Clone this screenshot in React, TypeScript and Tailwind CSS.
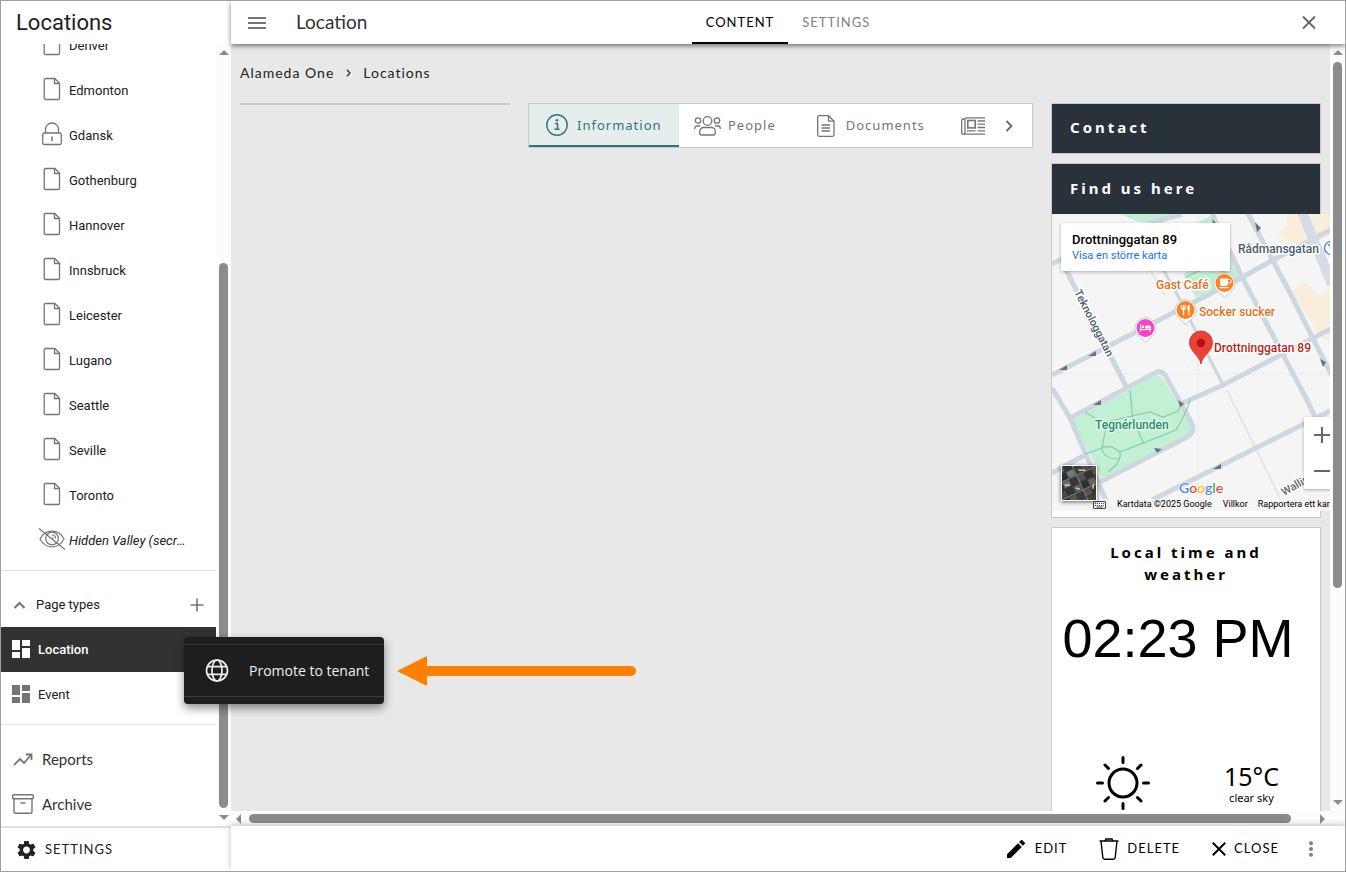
import React from 'react';

type PageIcon = 'page' | 'locked' | 'hidden';

interface LocationPage {
  name: string;
  icon: PageIcon;
}

const PAGES: LocationPage[] = [
  { name: 'Denver', icon: 'page' },
  { name: 'Edmonton', icon: 'page' },
  { name: 'Gdansk', icon: 'locked' },
  { name: 'Gothenburg', icon: 'page' },
  { name: 'Hannover', icon: 'page' },
  { name: 'Innsbruck', icon: 'page' },
  { name: 'Leicester', icon: 'page' },
  { name: 'Lugano', icon: 'page' },
  { name: 'Seattle', icon: 'page' },
  { name: 'Seville', icon: 'page' },
  { name: 'Toronto', icon: 'page' },
  { name: 'Hidden Valley (secret)', icon: 'hidden' },
];

function PageGlyph({ icon }: { icon: PageIcon }) {
  switch (icon) {
    case 'locked':
      return (
        <svg width="20" height="24" viewBox="0 0 20 24" fill="none" stroke="#757575" strokeWidth="1.3">
          <path d="M3.500 11V7.500a6.500 6.500 0 0 1 13 0V11" />
          <rect x="0.700" y="11" width="18.600" height="11.500" rx="1.500" />
          <path d="M10 14.500v4.500" strokeWidth="1.600" />
        </svg>
      );
    case 'hidden':
      return (
        <svg width="28" height="24" viewBox="0 0 28 24" fill="none" stroke="#757575" strokeWidth="1.2">
          <path d="M2 12C5 6.500 9 4.200 14 4.200S23 6.500 26 12c-3 5.300-7 8-12 8S5 17.300 2 12z" />
          <circle cx="14" cy="11.500" r="6.300" />
          <path d="M14 8a3.500 3.500 0 0 1 3.500 3.500M14 10.500a1 1 0 0 1 1 1" />
          <path d="M1 1.500 27 22.500" />
        </svg>
      );
    default:
      return (
        <svg width="18" height="24" viewBox="0 0 18 24" fill="none" stroke="#757575" strokeWidth="1.3">
          <path d="M2.500 1.500h9.300l4.700 4.700v15a1.300 1.300 0 0 1-1.300 1.300H2.500a1.300 1.300 0 0 1-1.300-1.300V2.800a1.300 1.300 0 0 1 1.300-1.300z" />
          <path d="M11.500 1.800v4.700h4.700" />
        </svg>
      );
  }
}

function DashboardIcon() {
  return (
    <svg width="18" height="18" viewBox="0 0 18 18" fill="currentColor">
      <path d="M0 0h8v10H0zM0 12h8v6H0zM10 0h8v6h-8zM10 8h8v10h-8z" />
    </svg>
  );
}

interface ArrowProps {
  dir: 'up' | 'down' | 'left' | 'right';
}

const ARROW_PATHS: Record<ArrowProps['dir'], string> = {
  up: 'M0 7 5 2l5 5z',
  down: 'M0 3l5 5 5-5z',
  left: 'M7 0 2 5l5 5z',
  right: 'M3 0l5 5-5 5z',
};

function ScrollArrow({ dir }: ArrowProps) {
  return (
    <svg className="shrink-0" width="10" height="10" viewBox="0 0 10 10" fill="#8b8b8b">
      <path d={ARROW_PATHS[dir]} />
    </svg>
  );
}

function Sidebar() {
  return (
    <aside className="flex w-[230px] shrink-0 flex-col bg-white">
      <h1 className="h-[43px] shrink-0 pl-[15px] text-[22px] leading-[43px]">Locations</h1>
      <div className="flex min-h-0 flex-1">
        {/* scrolled to the end, so the list hangs from the bottom edge */}
        <nav className="flex min-w-0 flex-1 flex-col justify-end overflow-hidden text-[13px]">
          <ul>
            {PAGES.map((page) => (
              <li key={page.name}>
                <a href="#" className="flex h-[45px] items-center pl-9">
                  <span className="-mt-1 flex w-[29px] shrink-0 justify-center">
                    <PageGlyph icon={page.icon} />
                  </span>
                  <span
                    className={`ml-[3px] w-[120px] truncate ${page.icon === 'hidden' ? 'italic' : ''}`}
                  >
                    {page.name}
                  </span>
                </a>
              </li>
            ))}
          </ul>
          <hr className="mt-[7px] mb-[11px] border-[#e0e0e0]" />
          <div className="flex h-[45px] shrink-0 items-center pl-3 pr-[11px]">
            <button type="button" className="flex flex-1 items-center text-left">
              <svg width="13" height="8" viewBox="0 0 13 8" fill="none" stroke="#757575" strokeWidth="2">
                <path d="M1.500 7 6.500 2l5 5" />
              </svg>
              <span className="ml-[10px]">Page types</span>
            </button>
            <button type="button" aria-label="Add page type">
              <svg width="16" height="16" viewBox="0 0 16 16" stroke="#757575" strokeWidth="1.600">
                <path d="M8 1.500v13M1.500 8h13" />
              </svg>
            </button>
          </div>
          <a
            href="#"
            className="flex h-[45px] shrink-0 items-center gap-2 bg-[#323232] pl-[11px] font-medium text-white"
          >
            <span className="-mt-[2px]">
              <DashboardIcon />
            </span>
            Location
          </a>
          <a href="#" className="flex h-[45px] shrink-0 items-center gap-2 pl-[11px]">
            <span className="-mt-[2px] text-[#757575]">
              <DashboardIcon />
            </span>
            Event
          </a>
          <hr className="mt-[7px] mb-3 border-[#e0e0e0]" />
          <a
            href="#"
            className="flex h-[45px] shrink-0 items-center pl-3 font-[Lato,sans-serif] text-[15px] text-[#333]"
          >
            <svg width="20" height="14" viewBox="0 0 20 14" fill="none" stroke="#757575" strokeWidth="1.800">
              <path d="M1 12l6-6 4 4 7-8" />
              <path d="M13 1.500h5.500V7" />
            </svg>
            <span className="ml-[9px]">Reports</span>
          </a>
          <a
            href="#"
            className="flex h-11 shrink-0 items-center pl-[11px] font-[Lato,sans-serif] text-[15px] text-[#333]"
          >
            <svg width="22" height="20" viewBox="0 0 22 20" fill="none" stroke="#757575" strokeWidth="1.400">
              <rect x="0.700" y="0.700" width="20.600" height="4" rx="1" />
              <path d="M2 4.700v13a1.500 1.500 0 0 0 1.500 1.500h15a1.500 1.500 0 0 0 1.500-1.500v-13M8.500 9h5" />
            </svg>
            <span className="ml-2">Archive</span>
          </a>
        </nav>
        <div className="flex w-[15px] shrink-0 flex-col items-center bg-[#fcfcfc] py-[4px]">
          <ScrollArrow dir="up" />
          <div className="my-[4px] flex w-[9px] flex-1 flex-col justify-end">
            <div className="h-[73%] rounded-full bg-[#8b8b8b]" />
          </div>
          <ScrollArrow dir="down" />
        </div>
      </div>
      <div className="h-[45px] shrink-0 border-t-2 border-[#e0e0e0]">
        <button
          type="button"
          className="flex h-full items-center pl-4 font-[Lato,sans-serif] text-[13px] tracking-[1px]"
        >
          <svg width="19" height="20" viewBox="2 2 20 20" fill="#222">
            <path d="M19.140 12.940c.040-.300.060-.610.060-.940 0-.320-.020-.640-.070-.940l2.030-1.580a.490.490 0 0 0 .120-.610l-1.920-3.320a.490.490 0 0 0-.590-.220l-2.390.960c-.500-.380-1.030-.700-1.620-.940l-.360-2.540a.484.484 0 0 0-.480-.410h-3.840c-.240 0-.430.170-.470.410l-.360 2.540c-.590.240-1.130.570-1.620.940l-2.390-.960c-.220-.080-.470 0-.590.220L2.740 8.870c-.120.210-.080.470.120.610l2.030 1.580c-.050.300-.090.630-.090.940s.020.640.070.940l-2.030 1.580a.490.490 0 0 0-.120.610l1.920 3.320c.120.220.370.290.590.220l2.390-.960c.500.380 1.030.700 1.620.940l.360 2.540c.050.240.240.410.480.410h3.840c.240 0 .440-.170.470-.410l.360-2.540c.590-.240 1.130-.560 1.620-.940l2.390.960c.220.080.470 0 .590-.220l1.920-3.320c.120-.220.070-.470-.120-.610l-2.010-1.580zM12 15.600c-1.980 0-3.600-1.620-3.600-3.600s1.620-3.600 3.600-3.600 3.600 1.620 3.600 3.600-1.620 3.600-3.600 3.600z" />
          </svg>
          <span className="ml-[9px]">SETTINGS</span>
        </button>
      </div>
    </aside>
  );
}

function TopBar() {
  return (
    <header className="z-10 grid h-[43px] shrink-0 grid-cols-[1fr_auto_1fr] bg-white font-[Lato,sans-serif] shadow-[0_2px_5px_rgba(0,0,0,0.5)]">
      <div className="flex items-center pl-[17px]">
        <button type="button" aria-label="Menu">
          <svg width="18" height="12" viewBox="0 0 18 12" stroke="#757575" strokeWidth="2">
            <path d="M0 1h18M0 6h18M0 11h18" />
          </svg>
        </button>
        <h2 className="ml-[30px] text-[19px] text-[#333]">Location</h2>
      </div>
      <div className="flex text-[13px] tracking-[1px]">
        <button type="button" className="border-b-2 border-black px-[14px] pt-[2px] text-black">
          CONTENT
        </button>
        <button type="button" className="border-b-2 border-transparent px-[14px] pt-[2px] text-[#808080]">
          SETTINGS
        </button>
      </div>
      <div className="flex items-center justify-end pr-[28px]">
        <button type="button" aria-label="Close">
          <svg width="16" height="16" viewBox="0 0 16 16" stroke="#666" strokeWidth="1.800">
            <path d="M2 1.500l12 12M14 1.500l-12 12" />
          </svg>
        </button>
      </div>
    </header>
  );
}

function ContentTabs() {
  return (
    <div className="flex h-[45px] border border-[#c9c9c9] bg-white text-[13px] tracking-[1px] text-[#757575]">
      <button
        type="button"
        className="flex w-[150px] shrink-0 items-center border-b-2 border-[#34737a] bg-[#e5eeec] pl-[17px] text-[#34737a]"
      >
        <svg width="22" height="22" viewBox="0 0 22 22" fill="none" stroke="currentColor" strokeWidth="1.400">
          <circle cx="11" cy="11" r="10.200" />
          <path d="M9 9.500h2.500V15M8.500 15.200h5" strokeWidth="1.600" />
          <circle cx="11" cy="6.300" r="1.300" fill="currentColor" stroke="none" />
        </svg>
        <span className="ml-[9px] pt-[2px]">Information</span>
      </button>
      <button type="button" className="flex shrink-0 items-center pl-[15px]">
        <svg width="27" height="20" viewBox="0 0 27 20" fill="none" stroke="currentColor" strokeWidth="1.300">
          <circle cx="13.500" cy="5" r="4.300" />
          <circle cx="4" cy="4.500" r="2.700" />
          <circle cx="23" cy="4.500" r="2.700" />
          <path d="M5.700 17v-1.500a4 4 0 0 1 4-4h7.600a4 4 0 0 1 4 4V17a2 2 0 0 1-2 2H7.700a2 2 0 0 1-2-2z" />
          <path d="M.700 13v-.500a2.500 2.500 0 0 1 2.500-2.500h3M26.300 13v-.500a2.500 2.500 0 0 0-2.500-2.500h-3" />
        </svg>
        <span className="ml-[7px]">People</span>
      </button>
      <button type="button" className="ml-[41px] flex shrink-0 items-center">
        <svg width="18" height="22" viewBox="0 0 18 22" fill="none" stroke="currentColor" strokeWidth="1.300">
          <path d="M2.200.700h9.300L17 6.200v13.600a1.500 1.500 0 0 1-1.500 1.500H2.200a1.500 1.500 0 0 1-1.500-1.500V2.200A1.500 1.500 0 0 1 2.200.700z" />
          <path d="M11.500.700v5.500H17M4.500 10h8.500M4.500 13h8.500M4.500 16h8.500" />
        </svg>
        <span className="ml-[11px]">Documents</span>
      </button>
      <div className="ml-auto flex items-center pr-[19px]">
        <button type="button" aria-label="News">
          <svg width="24" height="18" viewBox="0 0 24 18" fill="none" stroke="currentColor" strokeWidth="1.300">
            <path d="M24 .800H5.500A1.500 1.500 0 0 0 4 2.300v12.900a2 2 0 0 1-2 2 1.300 1.300 0 0 1-1.300-1.300V3.500A1.500 1.500 0 0 1 2.200 2H4M2 17.200h22" />
            <rect x="6.800" y="3.500" width="7.400" height="7.400" strokeWidth="1.600" />
            <path d="M16.500 4H24M16.500 7.200H24M16.500 10.500H24M6 13.800h8.500M16.500 13.800H24" />
          </svg>
        </button>
        <button type="button" aria-label="More tabs" className="ml-5">
          <svg width="8" height="12" viewBox="0 0 8 12" fill="none" stroke="#666" strokeWidth="1.800">
            <path d="M1.500 1l5 5-5 5" />
          </svg>
        </button>
      </div>
    </div>
  );
}

const ROADS = [
  'M0 161 185 66 221 46 290 10',
  'M0 50 10 45M12 52 75 174',
  'M158-5 190 63 255 186 263 203',
  'M194-4 235 73 290 182',
  'M131 189 171 171 290 109',
  'M100 286 290 191',
  'M0 174 18 204 60 300',
  'M18 204 75 174 101 160Q108 155 113 161L139 208Q144 217 135 223L48 268',
  'M0 259 33 241',
];

const SATELLITE_ROWS = [
  '#3d4a35', '#59605a', '#2c3330', '#6b5d5a', '#46543c', '#303338',
  '#524844', '#2b3128', '#747b80', '#36452f', '#5a4a4c', '#3e4046',
  '#2f3a2b', '#6a6e68', '#3c3535', '#554e57', '#2e3530', '#66504f',
  '#45503a', '#34303a', '#596553', '#2b2d30', '#70605e', '#3b4438',
  '#2a3129', '#4e5c40', '#3a3c42', '#684c50', '#333831', '#575b60',
  '#4b5545', '#2d302c', '#605550', '#394535', '#4c4148', '#2c322a',
];

interface PinProps {
  x: number;
  y: number;
  color: string;
}

function Pin({ x, y, color }: PinProps) {
  return (
    <g transform={`translate(${x} ${y})`}>
      <path
        d="M0 14.500-6 9A10.600 10.600 0 1 1 6 9z"
        fill="#fff"
        stroke="#b9bdc2"
        strokeWidth="0.800"
      />
      <circle r="9" fill={color} />
    </g>
  );
}

function MapCanvas() {
  return (
    <svg width="300" height="297" viewBox="0 0 300 297" className="block" fontFamily="Roboto, sans-serif">
      <rect width="300" height="297" fill="#f5f5f5" />
      <g fill="#c2f0d5">
        <path d="M68 0h57L98 9 84 7zM144 9l15-7 8 8-10 20z" />
        <path d="M131 60l44-22 13 24-44 22z" />
        <path d="M20 206 103 162q5-2 8 3l27 46q2 6-4 10L50 264z" />
      </g>
      <g fill="#f8eedb">
        <path d="M236-1h54v16l-38 20-27-15 9-7z" />
        <path d="M239 77l15-8 18 19 8 6v34l-10-4z" />
        <path d="M246 78l12-6 6 10 20-10v40l-18 8z" />
      </g>
      <g fill="none" stroke="#e3e5e7" strokeWidth="2">
        <path d="M175 176 228 284M98 55l14 26" />
        <path d="M146 0v297M0 160h290" strokeWidth="1" strokeOpacity="0.500" />
        <path d="M112 57 123 76 171 171" stroke="#ccd6df" strokeWidth="3" />
      </g>
      <g fill="none" stroke="#ccd7e0" strokeWidth="5" strokeLinejoin="round">
        {ROADS.map((d) => (
          <path key={d} d={d} />
        ))}
        <path d="M249-4 280 70" stroke="#d5dce6" strokeWidth="10" />
        <path d="M96 10 130 0" />
      </g>
      <g fill="none" stroke="#82d0ab" strokeWidth="1.200">
        <path d="M33 240 50 234Q54 210 58 207L98 198 111 203 126 197 131 188M78 176l3 30 11 24" />
        <path d="M50 234q8-4 18 4l56-22q14-24 14-32M68 238q2 10-12 20M50 235q2 10 18 10M33 198l10 6" />
        <path d="M134 63l28-13 15 12M150 20l12-10" />
      </g>
      <g fill="#6a737c">
        <path d="M7 156l8-5 0 5zM36 142l8-5 0 5zM41 191l8-5 0 5zM110 235l-8-1 3 5zM161 255l8-5 0 5zM126 186l2 7 4-3zM160 5l2 9 4-3zM203 8l2 10 4-4zM268 145l3 8 3-5z" />
      </g>
      <g strokeLinejoin="round" stroke="#fff" strokeWidth="3" paintOrder="stroke" fontSize="12" fontWeight="500">
        <text x="186" y="39" fill="#4a5b72">Rådmansgatan</text>
        <text x="104" y="75" fill="#e0701c">Gast Café</text>
        <text x="147" y="102" fill="#e0701c">Socker sucker</text>
        <text x="162" y="138" fill="#b3261e">Drottninggatan 89</text>
        <text x="43" y="215" fill="#2b8f6c" stroke="#dff7ea">Tegnérlunden</text>
        <text transform="translate(22 78) rotate(63)" fontSize="11" fill="#4a5b72">Teknologgatan</text>
        <text transform="translate(232 282) rotate(-30)" fontSize="11" fill="#5f6872">Wallingatan</text>
      </g>
      <circle cx="279" cy="34" r="6.500" fill="#fff" stroke="#3f7fd0" strokeWidth="1.300" />
      <path d="M276 31h6M279 31v6" stroke="#3f7fd0" strokeWidth="1.300" />
      <Pin x={172.5} y={69} color="#ff8124" />
      <Pin x={133.5} y={96} color="#ff8124" />
      <Pin x={93.500} y={114} color="#f843c8" />
      <g fill="#fff">
        <path d="M168 64.500h8v5a2.500 2.500 0 0 1-2.500 2.500h-3a2.500 2.500 0 0 1-2.500-2.500zM167.500 73h9.500v1.200h-9.500z" />
        <path d="M176 65.500h1.500a1.500 1.500 0 0 1 0 3.500H176" fill="none" stroke="#fff" />
        <path d="M129.500 91v3.500M131.500 91v3.500M133.300 91v3.500M131.500 94v7.500M137 91v10.500" stroke="#fff" strokeWidth="1.200" />
        <path d="M129 94h4.800l-1 2h-2.800zM135.500 92l1.500-1v6h-1.500z" />
        <path d="M88 110.500h1.200v4.500h8.600v-3h1v5.500h-1.200V116h-8.400v1.500H88z" />
        <circle cx="91" cy="112.800" r="1.300" />
        <path d="M93 111.500h4.800v3H93z" />
      </g>
      <path
        d="M149 150c-1.500-9-11.500-12-11.500-21.500a11.500 11.500 0 0 1 23 0C160.500 138 150.500 141 149 150z"
        fill="#ea4335"
        stroke="#c5221f"
        strokeWidth="0.700"
      />
      <circle cx="149" cy="129" r="4.200" fill="#b31412" />
      <text x="127" y="279" fontSize="14" fontWeight="500" fontFamily="Lato, sans-serif" stroke="#fff" strokeWidth="1" paintOrder="stroke">
        <tspan fill="#4285f4">G</tspan>
        <tspan fill="#ea4335">o</tspan>
        <tspan fill="#fbbc05">o</tspan>
        <tspan fill="#4285f4">g</tspan>
        <tspan fill="#34a853">l</tspan>
        <tspan fill="#ea4335">e</tspan>
      </text>
    </svg>
  );
}

function SatelliteThumb() {
  return (
    <svg width="34" height="34" viewBox="0 0 34 34">
      <rect width="34" height="34" fill="#363c35" />
      <g transform="rotate(-25 17 17)">
        {SATELLITE_ROWS.map((fill, i) => (
          <rect key={i} x={-6 + (i % 6) * 8} y={-6 + Math.floor(i / 6) * 8} width="7" height="6" fill={fill} />
        ))}
        <path d="M-8 9h50M18-8v50M-8 25h50" stroke="#8a8f92" strokeWidth="0.800" />
        <path d="M3 13l5 2M22 5l6 3M12 20l3 3M27 28l3-4" stroke="#c9cccb" strokeWidth="1.500" />
      </g>
    </svg>
  );
}

function MapCard() {
  return (
    <section className="border border-[#c9c9c9] bg-white pb-[6px]">
      <h3 className="flex h-[50px] items-center bg-[#293238] pb-[2px] pl-[18px] font-[Noto_Sans,sans-serif] text-[15px] font-bold tracking-[3px] text-white">
        Find us here
      </h3>
      <div className="relative h-[297px] w-[300px]">
        <MapCanvas />
        <div className="absolute top-[9px] left-[9px] h-12 w-[169px] bg-white pt-2 pl-[11px] shadow-[0_1px_3px_rgba(0,0,0,0.3)]">
          <p className="text-[13px] leading-[17px] font-medium text-black">Drottninggatan 89</p>
          <a href="#" className="block text-[11px] leading-[15px] text-[#1a73e8]">
            Visa en större karta
          </a>
        </div>
        <div className="absolute top-[203px] left-[252px] flex h-[72px] w-9 flex-col bg-white shadow-[0_1px_3px_rgba(0,0,0,0.3)]">
          <button type="button" aria-label="Zoom in" className="flex flex-1 items-center justify-center">
            <svg width="16" height="16" viewBox="0 0 16 16" stroke="#666" strokeWidth="2">
              <path d="M8 0v16M0 8h16" />
            </svg>
          </button>
          <button type="button" aria-label="Zoom out" className="flex flex-1 items-center justify-center">
            <svg width="16" height="16" viewBox="0 0 16 16" stroke="#666" strokeWidth="2">
              <path d="M0 8h16" />
            </svg>
          </button>
        </div>
        <div className="absolute bottom-0 left-[41px] flex h-3 items-center bg-[#f5f5f5]/80 text-[9px] whitespace-nowrap text-black">
          <svg width="13" height="8" viewBox="0 0 13 8" fill="none" stroke="#444">
            <rect x="0.500" y="0.500" width="12" height="7" rx="0.500" />
            <path d="M2 2.500h9M2 4.500h9" strokeDasharray="1 1" />
            <path d="M3.500 6h6" />
          </svg>
          <span className="ml-[11px]">Kartdata ©2025 Google</span>
          <a href="#" className="ml-[11px]">Villkor</a>
          <a href="#" className="ml-[10px]">Rapportera ett kartfel</a>
        </div>
        <button
          type="button"
          aria-label="Satellite view"
          className="absolute bottom-[10px] left-[9px] border border-white shadow-[0_1px_4px_rgba(0,0,0,0.6)]"
        >
          <SatelliteThumb />
        </button>
      </div>
    </section>
  );
}

function WeatherCard() {
  return (
    <section className="h-[330px] border border-[#c9c9c9] bg-white pt-[13px] text-center text-black">
      <h3 className="px-8 font-[Noto_Sans,sans-serif] text-[15px] leading-[22px] font-bold tracking-[3px]">
        Local time and weather
      </h3>
      <p className="mt-[22px] pr-4 font-[Liberation_Sans,Arial,sans-serif] text-[54px] leading-[62px] whitespace-nowrap">
        02:23 PM
      </p>
      <div className="mt-[87px] flex items-center pr-[41px] pl-11">
        <svg width="54" height="54" viewBox="0 0 54 54" fill="none" stroke="#000" strokeWidth="3" strokeLinecap="round">
          <circle cx="27" cy="27" r="14" />
          <path d="M27 1.500v5M27 47.500v5M1.500 27h5M47.500 27h5M9 9l3.500 3.500M41.500 41.500 45 45M9 45l3.500-3.500M41.500 12.500 45 9" />
        </svg>
        <div className="ml-auto pt-[2px] font-[Noto_Sans,sans-serif]">
          <p className="text-[25px] leading-[28px]">15°C</p>
          <p className="text-[11px] leading-[16px]">clear sky</p>
        </div>
      </div>
    </section>
  );
}

function PagePreview() {
  return (
    <div className="flex min-h-0 flex-1 bg-[#fcfcfc]">
      <div className="flex min-w-0 flex-1 flex-col">
        <div className="min-h-0 flex-1 overflow-hidden bg-[#e8e8e8] px-[9px] font-[Noto_Sans,sans-serif]">
          <nav className="flex h-[59px] items-center gap-3 pb-[2px] font-[Lato,sans-serif] text-[14px] tracking-[1px] text-[#222]">
            <a href="#">Alameda One</a>
            <svg width="5" height="8" viewBox="0 0 5 8" fill="none" stroke="#333" strokeWidth="1.300">
              <path d="M1 .700 4 4 1 7.300" />
            </svg>
            <a href="#">Locations</a>
          </nav>
          <div className="grid grid-cols-[270px_minmax(0,1fr)_270px] items-start gap-[18px]">
            <hr className="border-t-2 border-[#c9c9c9]" />
            <ContentTabs />
            <div className="flex flex-col gap-[9px] font-[Roboto,sans-serif]">
              <section className="border border-[#c9c9c9] bg-white">
                <h3 className="flex h-[49px] items-center bg-[#293238] pb-[2px] pl-[18px] font-[Noto_Sans,sans-serif] text-[15px] font-bold tracking-[3px] text-white">
                  Contact
                </h3>
              </section>
              <MapCard />
              <WeatherCard />
            </div>
          </div>
        </div>
        <div className="flex h-[15px] shrink-0 items-center px-[3px]">
          <ScrollArrow dir="left" />
          <div className="mx-[5px] h-[9px] flex-1">
            <div className="h-full w-[98%] rounded-full bg-[#8b8b8b]" />
          </div>
          <ScrollArrow dir="right" />
        </div>
      </div>
      <div className="mb-[15px] flex w-[15px] shrink-0 flex-col items-center py-[4px]">
        <ScrollArrow dir="up" />
        <div className="my-[4px] w-[9px] flex-1">
          <div className="h-[72%] rounded-full bg-[#8b8b8b]" />
        </div>
        <ScrollArrow dir="down" />
      </div>
    </div>
  );
}

function ActionBar() {
  return (
    <footer className="z-10 flex h-[45px] shrink-0 items-center justify-end bg-white pr-[29px] font-[Lato,sans-serif] text-[13px] tracking-[1px] text-black shadow-[0_-1px_6px_rgba(0,0,0,0.25)]">
      <button type="button" className="flex items-center">
        <svg width="18" height="18" viewBox="3 3 18 18">
          <path d="M3 17.250V21h3.750L17.810 9.940l-3.750-3.750L3 17.250zM20.710 7.040a1 1 0 0 0 0-1.410l-2.340-2.340a1 1 0 0 0-1.410 0l-1.830 1.830 3.750 3.750 1.830-1.830z" />
        </svg>
        <span className="ml-[10px]">EDIT</span>
      </button>
      <button type="button" className="ml-8 flex items-center">
        <svg width="20" height="22" viewBox="0 0 20 22" fill="none" stroke="#000" strokeWidth="1.400">
          <path d="M.500 3h19M2 3l1.800 16.500a2 2 0 0 0 2 1.700h8.400a2 2 0 0 0 2-1.700L18 3M6 3l1-2h6l1 2" />
        </svg>
        <span className="ml-2">DELETE</span>
      </button>
      <button type="button" className="ml-8 flex items-center">
        <svg width="14" height="14" viewBox="0 0 14 14" stroke="#000" strokeWidth="2">
          <path d="M.800.800l12.400 12.400M13.200.800.800 13.200" />
        </svg>
        <span className="ml-2">CLOSE</span>
      </button>
      <button type="button" aria-label="More actions" className="ml-[27px]">
        <svg width="10" height="16" viewBox="0 0 10 16" fill="#808080">
          <circle cx="5" cy="2.200" r="2" />
          <circle cx="5" cy="8" r="2" />
          <circle cx="5" cy="13.800" r="2" />
        </svg>
      </button>
    </footer>
  );
}

function ContextMenu() {
  return (
    <div
      role="menu"
      className="absolute bottom-[167px] left-[183px] z-20 w-[200px] rounded bg-[#1e1e1e] py-[7px] shadow-[0_4px_10px_rgba(0,0,0,0.45)]"
    >
      <button
        type="button"
        role="menuitem"
        className="flex h-[53px] w-full items-center border-y border-[#3a3a3a] pl-[21px] font-[Open_Sans,sans-serif] text-[14px] text-[#eee]"
      >
        <svg width="24" height="24" viewBox="0 0 24 24" fill="none" stroke="#eee" strokeWidth="1.700">
          <circle cx="12" cy="11.500" r="10.500" />
          <ellipse cx="12" cy="11.500" rx="5" ry="10.500" />
          <path d="M2.500 7.700h19M2.500 15.300h19" />
        </svg>
        <span className="ml-5 whitespace-nowrap">Promote to tenant</span>
      </button>
    </div>
  );
}

function CalloutArrow() {
  return (
    <svg
      className="absolute bottom-[185px] left-[396px] z-20"
      width="240"
      height="30"
      viewBox="0 0 240 30"
      fill="#ff8000"
    >
      <path d="M0 15 30 0v10h204a5 5 0 0 1 0 10H30v10z" />
    </svg>
  );
}

export default function App() {
  return (
    <div className="relative flex h-screen overflow-hidden border border-[#a0a0a0] bg-white font-[Roboto,sans-serif] text-[#212121]">
      <Sidebar />
      <main className="flex min-w-0 flex-1 flex-col">
        <TopBar />
        <PagePreview />
        <ActionBar />
      </main>
      <ContextMenu />
      <CalloutArrow />
    </div>
  );
}
